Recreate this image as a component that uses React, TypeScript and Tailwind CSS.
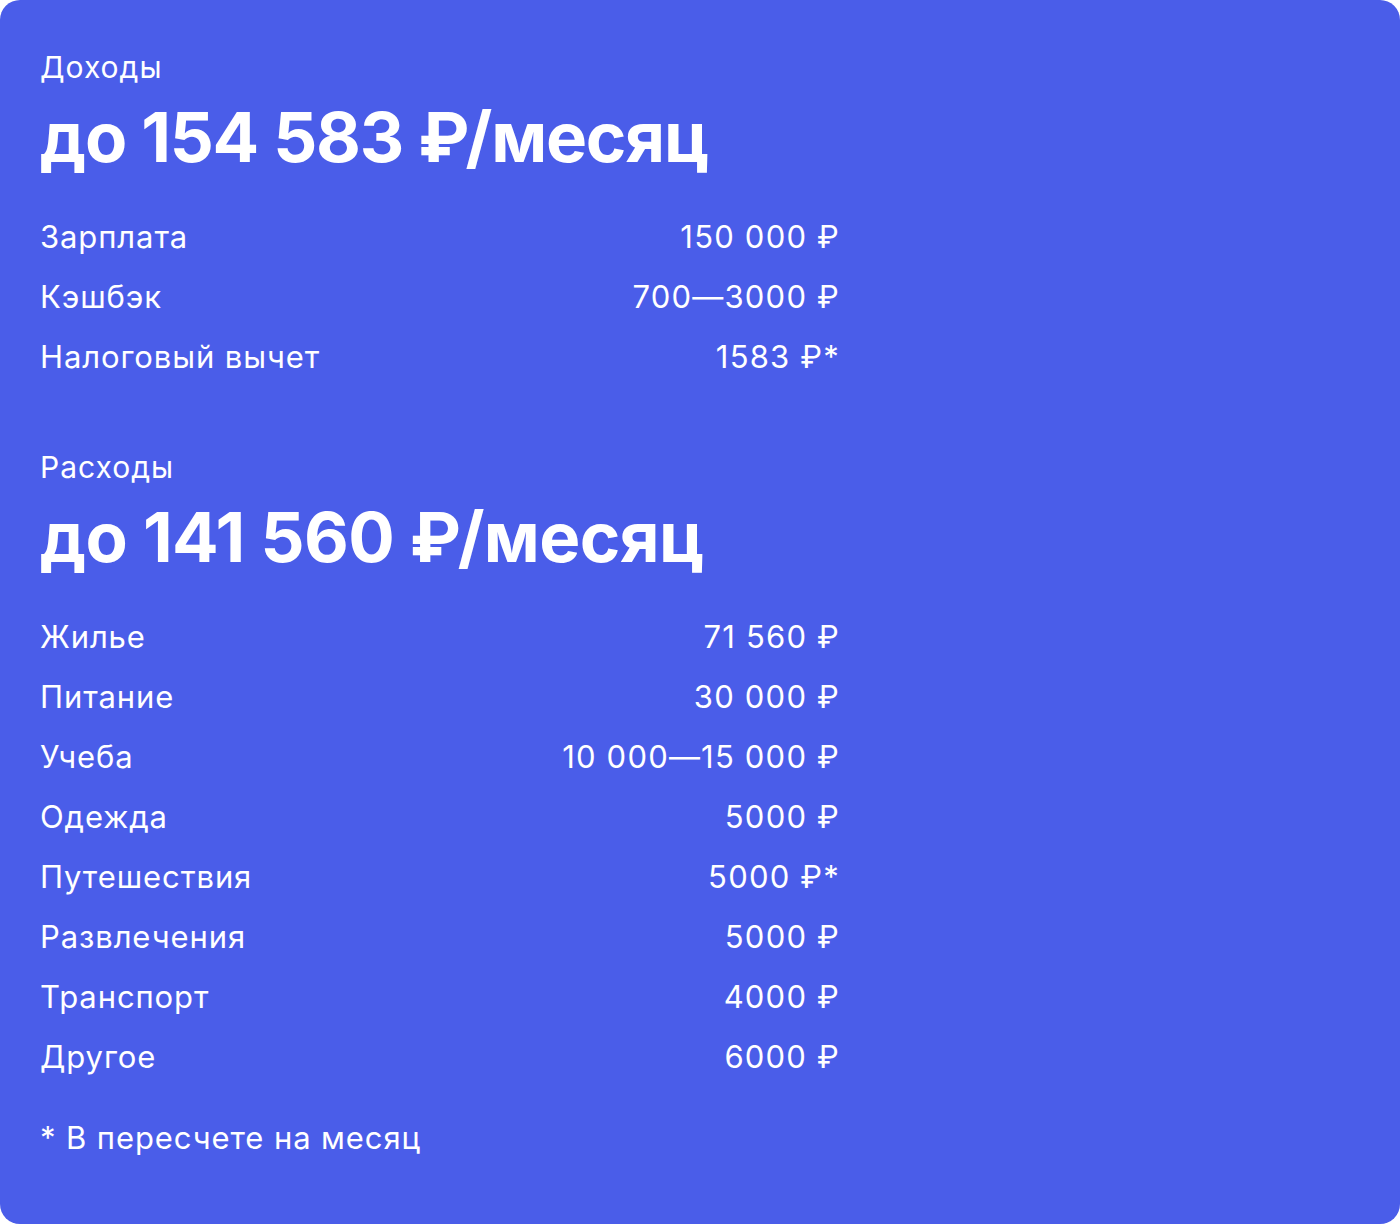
const income = [
  { label: 'Зарплата', value: '150 000 ₽' },
  { label: 'Кэшбэк', value: '700—3000 ₽' },
  { label: 'Налоговый вычет', value: '1583 ₽*' },
];

const expenses = [
  { label: 'Жилье', value: '71 560 ₽' },
  { label: 'Питание', value: '30 000 ₽' },
  { label: 'Учеба', value: '10 000—15 000 ₽' },
  { label: 'Одежда', value: '5000 ₽' },
  { label: 'Путешествия', value: '5000 ₽*' },
  { label: 'Развлечения', value: '5000 ₽' },
  { label: 'Транспорт', value: '4000 ₽' },
  { label: 'Другое', value: '6000 ₽' },
];

function Rows({ items }: { items: { label: string; value: string }[] }) {
  return (
    <div className="w-[800px] mt-5">
      {items.map((row) => (
        <div key={row.label} className="flex justify-between items-center h-[60px] text-[31px] leading-[60px] tracking-[0.9px]">
          <span>{row.label}</span>
          <span className="tracking-[1.2px]">{row.value}</span>
        </div>
      ))}
    </div>
  );
}

export default function App() {
  return (
    <div className="w-[1400px] h-[1224px] bg-white">
      <div className="h-full rounded-[20px] bg-[#4a5de9] text-white px-10 pt-[47px] font-['Inter',sans-serif]">
        <p className="text-[30px] leading-[40px] tracking-[1px]">Доходы</p>
        <h2 className="text-[69px] leading-[100px] font-bold tracking-[-1.2px]">до 154 583 ₽/месяц</h2>
        <Rows items={income} />

        <p className="text-[30px] leading-[40px] tracking-[1px] mt-[60px]">Расходы</p>
        <h2 className="text-[69px] leading-[100px] font-bold tracking-[-0.6px]">до 141 560 ₽/месяц</h2>
        <Rows items={expenses} />

        <p className="text-[31px] leading-[40px] tracking-[0.9px] mt-[31px]">* В пересчете на месяц</p>
      </div>
    </div>
  );
}
